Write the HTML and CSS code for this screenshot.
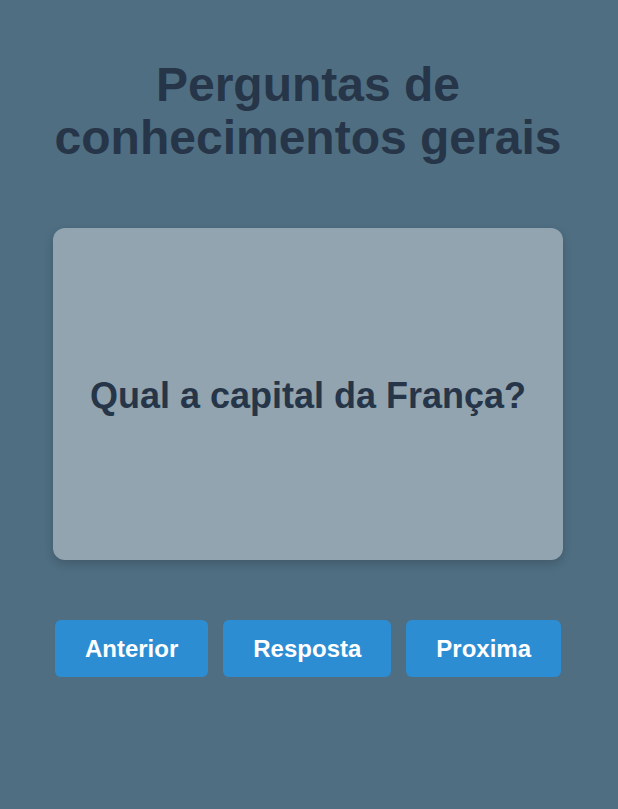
FILE: index.html
```html
<!DOCTYPE html>
<html lang="pt">
<head>
<meta charset="utf-8">
<title>Perguntas de conhecimentos gerais</title>
<link rel="stylesheet" href="styles.css">
</head>
<body>
<main class="app">
  <h1 class="title">Perguntas de conhecimentos gerais</h1>
  <section class="card">
    <p class="question">Qual a capital da França?</p>
  </section>
  <div class="actions">
    <button class="btn">Anterior</button>
    <button class="btn">Resposta</button>
    <button class="btn">Proxima</button>
  </div>
</main>
</body>
</html>
```
FILE: styles.css
```css
html, body {
  margin: 0;
  background: #4f6e82;
}
body {
  padding: 0 2px 0 0;
  font-family: "Liberation Sans", Arial, sans-serif;
  color: #263548;
}
.app {
  width: 510px;
  margin: 0 auto;
  display: flex;
  flex-direction: column;
  align-items: center;
}
.title {
  margin: 58px -20px 64px;
  font-size: 48px;
  line-height: 53px;
  font-weight: 700;
  text-align: center;
  color: #263548;
}
.card {
  width: 510px;
  height: 332px;
  background: #91a4b0;
  border-radius: 12px;
  box-shadow: 0 4px 10px rgba(0, 0, 0, 0.18);
  display: flex;
  align-items: center;
  justify-content: center;
}
.question {
  margin: 0;
  padding-top: 4px;
  font-size: 36px;
  font-weight: 700;
  color: #263548;
}
.actions {
  margin-top: 60px;
  display: flex;
  gap: 15px;
  justify-content: center;
}
.btn {
  height: 57px;
  padding: 0 30px;
  border: none;
  border-radius: 6px;
  background: #2d8dd3;
  color: #ffffff;
  font-family: "Liberation Sans", Arial, sans-serif;
  font-size: 24px;
  font-weight: 700;
  cursor: pointer;
}
```
